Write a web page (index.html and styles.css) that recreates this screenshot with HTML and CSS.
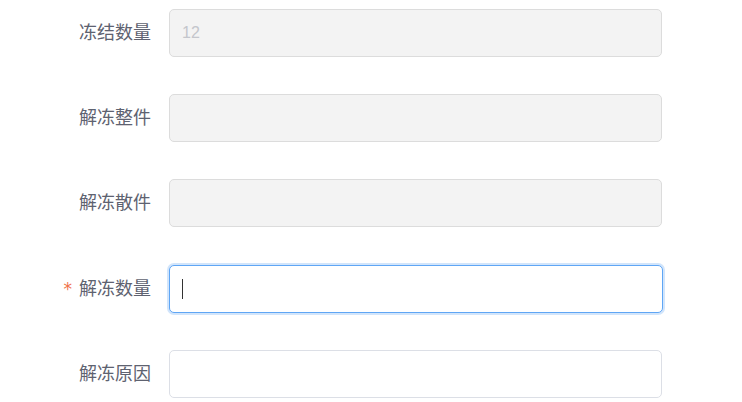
FILE: index.html
```html
<!DOCTYPE html>
<html lang="zh">
<head>
<meta charset="utf-8">
<link rel="stylesheet" href="styles.css">
</head>
<body>
<form class="form">
  <div class="row">
    <label class="label">冻结数量</label>
    <div class="field disabled"><span class="value">12</span></div>
  </div>
  <div class="row">
    <label class="label">解冻整件</label>
    <div class="field disabled"></div>
  </div>
  <div class="row">
    <label class="label">解冻散件</label>
    <div class="field disabled"></div>
  </div>
  <div class="row row-shift">
    <label class="label required"><span class="star">*</span>解冻数量</label>
    <div class="field focused"><span class="caret"></span></div>
  </div>
  <div class="row">
    <label class="label">解冻原因</label>
    <div class="field"></div>
  </div>
</form>
</body>
</html>
```
FILE: styles.css
```css
html, body {
  margin: 0;
  padding: 0;
  background: #ffffff;
}
body {
  font-family: "Noto Sans CJK SC", "Liberation Sans", sans-serif;
}
.form {
  display: flex;
  flex-direction: column;
  gap: 37px;
  padding-top: 9px;
}
.row {
  display: flex;
  align-items: center;
  height: 48px;
}
.row-shift {
  margin-top: 1px;
}
.label {
  width: 151px;
  padding-right: 18px;
  text-align: right;
  font-size: 18px;
  line-height: 24px;
  color: #5e6270;
  padding-bottom: 5px;
  display: flex;
  justify-content: flex-end;
  align-items: center;
}
.star {
  color: #f0714a;
  font-family: "DejaVu Sans", sans-serif;
  font-size: 17px;
  margin-right: 7px;
  position: relative;
  top: 2px;
}
.field {
  box-sizing: border-box;
  width: 493px;
  height: 48px;
  border: 1px solid #dcdfe6;
  border-radius: 5px;
  background: #ffffff;
  display: flex;
  align-items: center;
  padding-left: 12px;
}
.field.disabled {
  background: #f3f3f3;
  border-color: #dcdcdc;
}
.value {
  font-family: "Liberation Sans", sans-serif;
  font-size: 16px;
  color: #c4c6cc;
}
.field.focused {
  width: 494px;
  border-color: #5fa6f5;
  box-shadow: 0 0 0 2px #d2e5fb;
}
.caret {
  display: block;
  width: 1px;
  height: 20px;
  background: #333333;
}
```
